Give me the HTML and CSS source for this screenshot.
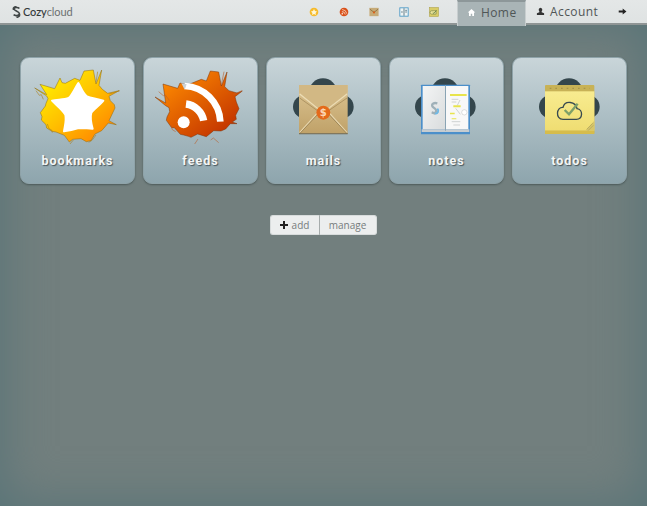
FILE: index.html
```html
<!DOCTYPE html>
<html lang="en">
<head>
<meta charset="utf-8">
<title>Cozycloud</title>
<link rel="stylesheet" href="styles.css">
</head>
<body>
<svg class="defs" width="0" height="0" aria-hidden="true">
  <defs>
    <linearGradient id="gStar" x1="0" y1="0" x2="1" y2="1"><stop offset=".1" stop-color="#fff200"/><stop offset=".5" stop-color="#ffc000"/><stop offset=".85" stop-color="#ff8c00"/></linearGradient>
    <linearGradient id="gRss" x1="0" y1="0" x2="1" y2="1"><stop offset=".1" stop-color="#ff8c00"/><stop offset=".9" stop-color="#c03000"/></linearGradient>
    <linearGradient id="gEnv" x1="0" y1="0" x2="0" y2="1"><stop offset="0" stop-color="#dcc492"/><stop offset="1" stop-color="#bfa168"/></linearGradient>
    <linearGradient id="gPad" x1="0" y1="0" x2="0" y2="1"><stop offset="0" stop-color="#f8ec90"/><stop offset="1" stop-color="#efdd72"/></linearGradient>
    <linearGradient id="gPage" x1="0" y1="0" x2="1" y2="1"><stop offset="0" stop-color="#f4f5f5"/><stop offset="1" stop-color="#d9dcdd"/></linearGradient>
    <g id="cloudBack" fill="#34464c">
      <circle cx="183" cy="127" r="42"/><circle cx="128" cy="170" r="35"/><circle cx="240" cy="170" r="35"/><rect x="128" y="125" width="112" height="90"/>
    </g>
  </defs>
</svg>
<header class="topbar">
  <div class="logo">
    <svg class="logo-mark" viewBox="0 0 10 13"><path d="M8.200 2.600C7 1.200 2.800 1 2.200 3c-.5 1.900 6 2.800 6 5.200 0 2.500-4.600 3-6.400 1.300M1.800 4C.8 2 2.500 .7 5 .7M8.300 9c.6 2.100-1.300 3.400-3.300 3.400" fill="none" stroke="#3f4545" stroke-width="1.800"/></svg>
    <span class="logo-text">Cozy<span class="logo-thin">cloud</span></span>
  </div>
  <nav class="quick">
    <svg class="mini" viewBox="0 0 12 12"><circle cx="6" cy="6" r="5.200" fill="#f6bb2c"/><path d="M6 2.500l1.200 2.300 2.400.5-1.700 1.800.4 2.500L6 8.500 3.700 9.600l.4-2.500-1.700-1.800 2.400-.5z" fill="#fff8d8"/></svg>
    <svg class="mini" viewBox="0 0 12 12"><circle cx="6" cy="6" r="5.200" fill="#d9501a"/><path d="M3.500 5.500a4 4 0 0 1 4 3.500M3.800 3a6 6 0 0 1 5.500 5" stroke="#f6d6c0" fill="none"/><circle cx="4" cy="8" r="1" fill="#f6d6c0"/></svg>
    <svg class="mini" viewBox="0 0 12 12"><rect x=".5" y="1" width="11" height="10" fill="#c6ab78"/><path d="M1 2.500l5 4 5-4" stroke="#8a6c3c" fill="none"/><circle cx="6" cy="6.500" r="1.300" fill="#d9601a"/></svg>
    <svg class="mini" viewBox="0 0 12 12"><rect x="1" y="1" width="10" height="10" fill="#f0f4f4" stroke="#3f93c4"/><path d="M6 1.500v9M7.500 4h2M7.500 6h2M2.500 6h2" stroke="#4a6a78"/></svg>
    <svg class="mini" viewBox="0 0 12 12"><rect x=".5" y=".5" width="11" height="11" fill="#d8cc66" stroke="#a89c48" stroke-width=".6"/><path d="M3 8.500a2 2 0 0 1 .5-4h5v4z" fill="#efe79a" stroke="#6d7a4a" stroke-width=".7"/><path d="M4.500 6.500l1.300 1.200L9 4" stroke="#5a7a40" fill="none"/></svg>
  </nav>
  <nav class="tabs">
    <a class="tab tab-active"><svg class="tab-icon" viewBox="0 0 10 10"><path d="M5 1L.8 5h1.400v4h2V6.500h1.600V9h2V5h1.400z" fill="#fff"/></svg>Home</a>
    <a class="tab"><svg class="tab-icon" viewBox="0 0 10 10"><path d="M5 .8a2.100 2.300 0 0 1 1.300 4v.9L9 7v2H1V7l2.700-1.300v-.9A2.100 2.300 0 0 1 5 .8z" fill="#333"/></svg>Account</a>
    <a class="tab tab-exit"><svg class="tab-icon" viewBox="0 0 10 10"><path d="M.8 4h4.400V1.800L9.400 5 5.200 8.200V6H.8z" fill="#222"/></svg></a>
  </nav>
</header>
<main class="home">
  <section class="apps">
    <a class="app">
      <svg class="app-art" viewBox="30 21 345 276">
        <path d="M90 103l44 13 16-32 6 14 10 2 28-15 16 6 12-28 28-3 8 42 17-42-8 46 10 12 16 12 34-8-30 17 4 13 12 12 2 10-18 38 22 12-24-5-20 23-20 10-12 20-14 3-16-9-25 2-10 8-15-20-25-10-12-2-16-10-2-10-14-14 2-10-5-12 15-20 2-8 6-14-4-8-36-24 36 20z" fill="url(#gStar)" stroke="#8f6a10" stroke-width="1.500"/>
        <path d="M78 122l10 14 6-2 6 14M263 65l-5 32M330 122l-32 10M112 222l5 14 8 4 2 8M180 282l10-12M236 277l10-6 12-16" stroke="#a8801e" stroke-width="1.800" fill="none"/>
        <path d="M205 99c8 12 12 30 26 40 12 6 30 6 49 13-10 14-28 24-36 36-4 14 0 34 4 48-14-2-24-2-42-2-14 4-32 8-44 10 2-16 8-32 4-50-8-14-26-28-40-42 14-4 36-2 50-8 12-10 20-32 29-45z" fill="#fff" stroke="#fff" stroke-width="6" stroke-linejoin="round"/>
      </svg>
      <span class="app-name">bookmarks</span>
    </a>
    <a class="app">
      <svg class="app-art" viewBox="15 21 345 276">
        <path d="M75 102l44 13 7-16 22 6 42-17 15 5 12-30 25 3 8 42 17-42-7 44 13 12 24 7 16-6-22 17 4 16 8 20-10 20 2 12-12 8 14 5-20 0-14 16-14 6-22-1-22 18-26-8-20 10-8-3-14-4-10-2-18-20-8 0-16-22 2-10 8-16-2-12-10-6-32-26 32 18z" fill="url(#gRss)" stroke="#7e3408" stroke-width="1.500"/>
        <path d="M62 125l14 12 6-2 12 16M258 65l-8 40M312 122l-26 12M98 225l5 14 10 6M170 282l10-15M242 278l-16-14-8 6" stroke="#b8602c" stroke-width="1.800" fill="none"/>
        <circle cx="137" cy="217" r="18" fill="#fff"/>
        <path d="M144 162a62 62 0 0 1 53 50" fill="none" stroke="#fff" stroke-width="22"/>
        <path d="M140 108a112 112 0 0 1 107 107" fill="none" stroke="#fff" stroke-width="20"/>
        <path d="M130 100l16 3-6 16z" fill="#ccd2d4"/>
      </svg>
      <span class="app-name">feeds</span>
    </a>
    <a class="app">
      <svg class="app-art" viewBox="12 21 345 276">
        <use href="#cloudBack"/>
        <rect x="111" y="105" width="146" height="147" fill="url(#gEnv)"/>
        <path d="M111 105h146v22l-72 60-74-60z" fill="#d2b884"/>
        <path d="M113 248l56-62M255 248l-56-62" stroke="#e6d5ac" stroke-width="4" fill="none"/>
        <path d="M112 252l58-62M256 252l-58-62" stroke="#8a7246" stroke-width="2" fill="none"/>
        <path d="M113 132l70 56 72-56" fill="none" stroke="#ecdcb4" stroke-width="4"/>
        <path d="M113 144l70 50 72-50" fill="none" stroke="#9c8252" stroke-width="2"/>
        <path d="M111 250h146v3H111z" fill="#6e6a58"/>
        <circle cx="184" cy="188" r="21" fill="#e46a1a"/>
        <text class="seal" x="184" y="199" text-anchor="middle">$</text>
      </svg>
      <span class="app-name">mails</span>
    </a>
    <a class="app">
      <svg class="app-art" viewBox="12 21 345 276">
        <use href="#cloudBack" x="-3"/>
        <rect x="108" y="104" width="147" height="149" rx="2" fill="#4b8fca"/>
        <rect x="113" y="108" width="67" height="130" fill="url(#gPage)"/>
        <rect x="183" y="108" width="67" height="130" fill="#f8f8f8"/>
        <path d="M110 238h143v8H110z" fill="#c6ccd0"/>
        <path d="M180 106h3v136h-3z" fill="#8aa4b4"/>
        <path d="M195 132h50v6h-50zM195 188h14v5h-14zM205 166h22v6h-22zM200 205h14v3h-14z" fill="#e8e44c"/>
        <path d="M200 148h20M200 156h14M225 150l-8 16M212 175l14 18M200 215h26M205 225h20" stroke="#a8aeae" stroke-width="1.500" fill="none"/>
        <circle cx="238" cy="187" r="8" fill="#fff" stroke="#9aa0a0"/>
        <path d="M157 160c-14-4-20 6-12 12s13 10 4 18l-9-3" fill="none" stroke="#9fb0b8" stroke-width="7"/>
        <path d="M150 190c8 3 13-8 7-14" fill="none" stroke="#70b8e4" stroke-width="6"/>
      </svg>
      <span class="app-name">notes</span>
    </a>
    <a class="app">
      <svg class="app-art" viewBox="12 21 345 276">
        <use href="#cloudBack"/>
        <rect x="111" y="105" width="148" height="147" rx="3" fill="#c8b256"/>
        <rect x="111" y="124" width="148" height="118" fill="url(#gPad)"/>
        <path d="M111 242h148v10H111z" fill="#d6bc4c"/>
        <path d="M125 115h120" stroke="#a8954a" stroke-width="4" stroke-dasharray="5 12"/>
        <path d="M259 212l-27 30 27 0z" fill="#d8c668"/>
        <path d="M236 238l18-18M240 242l16-16" stroke="#a8a060" stroke-width="2"/>
        <path d="M165 208h40c20 0 21-30 2-32-4-22-36-26-42-4-20-2-24 36 0 36z" fill="none" stroke="#384a50" stroke-width="4"/>
        <path d="M170 180l13 13 26-32" fill="none" stroke="#7ea068" stroke-width="7"/>
      </svg>
      <span class="app-name">todos</span>
    </a>
  </section>
  <div class="actions">
    <button class="action action-add"><svg class="plus" viewBox="0 0 8 8"><path d="M3 0h2v3h3v2H5v3H3V5H0V3h3z" fill="#222"/></svg>add</button>
    <button class="action action-manage">manage</button>
  </div>
</main>
</body>
</html>
```
FILE: styles.css
```css
* { box-sizing: border-box; }
html, body { height: 100%; }
body {
  margin: 0;
  overflow: hidden;
  display: flex;
  flex-direction: column;
  font-family: "Open Sans", "DejaVu Sans", sans-serif;
  background: #727f7e;
}
.defs { position: absolute; }
.topbar {
  height: 25px;
  flex: none;
  display: flex;
  align-items: flex-start;
  background: linear-gradient(#e4e7e7, #dfe3e3);
  border-bottom: 2px solid #8f9595;
  position: relative;
  z-index: 1;
}
.logo {
  display: flex;
  align-items: center;
  gap: 2px;
  height: 23px;
  padding-left: 12px;
  width: 300px;
}
.logo-mark { width: 9px; height: 12px; }
.logo-text { font: 500 11px "Lato", sans-serif; color: #33393a; letter-spacing: -.1px; }
.logo-thin { color: #6c7070; font-weight: 400; }
.quick {
  display: flex;
  gap: 20px;
  height: 23px;
  align-items: center;
  padding-left: 9px;
  width: 157px;
}
.mini { width: 10px; height: 10px; flex: none; }
.tabs { display: flex; height: 26px; }
.tab {
  display: flex;
  align-items: center;
  height: 23px;
  gap: 5px;
  padding: 0 10px;
  font-size: 12px;
  letter-spacing: .4px;
  color: #505656;
}
.tab-active {
  width: 69px;
  height: 26px;
  background: #a9b4b6;
  border-top: 2px solid #8d9799;
  border-left: 1px solid #c8cecf;
  border-right: 1px solid #c8cecf;
  padding-bottom: 3px;
  padding-left: 9px;
}
.tab-icon { width: 9px; height: 9px; flex: none; }
.tab-exit { padding-left: 10px; }
.home {
  flex: 1;
  padding: 32px 20px 0;
  box-shadow: inset 0 0 50px #567377;
}
.apps {
  display: grid;
  grid-template-columns: repeat(5, 115px);
  column-gap: 8px;
}
.app {
  display: block;
  height: 127px;
  border-radius: 9px;
  background: linear-gradient(#c9d5d9, #adbfc5 45%, #8ea5ad);
  border: 1px solid #8fa3a9;
  box-shadow: 0 1px 2px rgba(50, 65, 65, .6);
}
.app-art { display: block; width: 115px; height: 92px; margin: -1px; }
.app-name {
  display: block;
  margin-top: 5px;
  text-align: center;
  font: 700 12.500px "Roboto", sans-serif;
  letter-spacing: 1px;
  color: #f4f6f6;
  text-shadow: 1px 1px 1px #47555a;
}
.seal { font: 700 30px "DejaVu Sans", sans-serif; fill: #fbd6b4; }
.actions {
  display: flex;
  justify-content: center;
  margin: 31px 0 0 -1px;
}
.action {
  height: 20px;
  padding: 0;
  border: 1px solid #d8dcdc;
  background: #eceeee;
  font: 10px "Open Sans", sans-serif;
  color: #767c7c;
  display: flex;
  align-items: center;
  justify-content: center;
}
.action-add {
  width: 50px;
  gap: 4px;
  border-radius: 3px 0 0 3px;
  border-right: 1px solid #a6acac;
}
.action-manage {
  width: 57px;
  border-left: 0;
  border-radius: 0 3px 3px 0;
}
.plus { width: 8px; height: 8px; }
```
